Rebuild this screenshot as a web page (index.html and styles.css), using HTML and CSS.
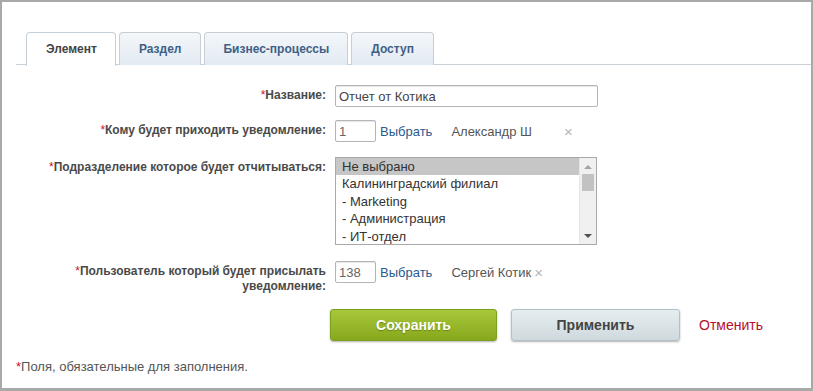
FILE: index.html
```html
<!DOCTYPE html>
<html lang="ru">
<head>
<meta charset="UTF-8">
<title>Элемент</title>
<link rel="stylesheet" href="styles.css">
</head>
<body>
<div class="frame">

  <div class="tabs">
    <div class="tab active">Элемент</div>
    <div class="tab">Раздел</div>
    <div class="tab">Бизнес-процессы</div>
    <div class="tab">Доступ</div>
  </div>

  <div class="form">
    <div class="row row-name">
      <div class="label"><span class="req">*</span>Название:</div>
      <div class="field">
        <input class="text name" type="text" value="Отчет от Котика">
      </div>
    </div>

    <div class="row row-user">
      <div class="label"><span class="req">*</span>Кому будет приходить уведомление:</div>
      <div class="field">
        <input class="text small" type="text" value="1">
        <a class="pick" href="#">Выбрать</a>
        <span class="user">Александр Ш</span>
        <span class="remove far">×</span>
      </div>
    </div>

    <div class="row row-dept">
      <div class="label"><span class="req">*</span>Подразделение которое будет отчитываться:</div>
      <div class="field">
        <div class="listbox">
          <div class="options">
            <div class="option selected">Не выбрано</div>
            <div class="option">Калининградский филиал</div>
            <div class="option">- Marketing</div>
            <div class="option">- Администрация</div>
            <div class="option">- ИТ-отдел</div>
          </div>
          <div class="scrollbar">
            <span class="arrow up"></span>
            <span class="thumb"></span>
            <span class="arrow down"></span>
          </div>
        </div>
      </div>
    </div>

    <div class="row row-sender">
      <div class="label"><span class="req">*</span>Пользователь который будет присылать<br>уведомление:</div>
      <div class="field">
        <input class="text small" type="text" value="138">
        <a class="pick" href="#">Выбрать</a>
        <span class="user">Сергей Котик</span>
        <span class="remove">×</span>
      </div>
    </div>
  </div>

  <div class="buttons">
    <button class="btn save">Сохранить</button>
    <button class="btn apply">Применить</button>
    <a class="cancel" href="#">Отменить</a>
  </div>

  <div class="note"><span class="req">*</span>Поля, обязательные для заполнения.</div>
</div>
</body>
</html>
```

FILE: styles.css
```css
* {
  box-sizing: border-box;
}
body {
  margin: 0;
  background: #fff;
  font-family: "Liberation Sans", Arial, sans-serif;
  color: #333;
}
.frame {
  width: 813px;
  height: 391px;
  border: 2px solid #a9a9a9;
  border-bottom-width: 3px;
  padding-top: 30px;
}
.tabs {
  display: flex;
  gap: 3px;
  margin-left: 14px;
  padding-left: 10px;
  border-bottom: 1px solid #c9d0d6;
  height: 33px;
}
.tab {
  height: 33px;
  padding: 0 19px;
  line-height: 32px;
  font-size: 12px;
  font-weight: bold;
  color: #3f5f86;
  border: 1px solid #c6ced6;
  border-bottom: none;
  border-radius: 4px 4px 0 0;
  background: linear-gradient(#f4f7fa, #e2eaf2);
}
.tab:nth-child(3) { padding: 0 18px; }
.tab.active {
  color: #444;
  background: #fff;
  height: 34px;
  padding: 0 18px 0 19px;
}
.form {
  padding-top: 20px;
}
.row {
  display: flex;
  align-items: flex-start;
}
.label {
  width: 324px;
  margin-right: 9px;
  padding-top: 3px;
  text-align: right;
  font-size: 12px;
  line-height: 15px;
  font-weight: bold;
  color: #4a4a4a;
}
.req {
  color: #c8102e;
  font-weight: normal;
}
.field {
  display: flex;
  align-items: center;
  font-size: 13px;
}
.row-name { margin-bottom: 13px; }
.row-user { margin-bottom: 15px; }
.row-dept { margin-bottom: 16px; }
.text {
  height: 22px;
  border: 1px solid #b5b5b5;
  border-radius: 2px;
  padding: 0 3px;
  font-family: inherit;
  font-size: 13px;
  color: #444;
  box-shadow: inset 0 1px 1px #e6e6e6;
}
.name { width: 263px; }
.small { width: 41px; color: #666; }
.pick {
  color: #2a5b8e;
  text-decoration: none;
  margin-left: 4px;
}
.user {
  margin-left: 19px;
  color: #555;
}
.remove {
  color: #b5b5b5;
  font-size: 15px;
  margin-left: 3px;
}
.remove.far {
  margin-left: 32px;
}
.listbox {
  display: flex;
  width: 262px;
  height: 88px;
  border: 1px solid #a9a9a9;
  overflow: hidden;
}
.options {
  flex: 1;
}
.option {
  height: 17.4px;
  line-height: 17px;
  padding-left: 6px;
  font-size: 13px;
  color: #333;
  white-space: nowrap;
}
.option.selected {
  background: #c6c6c6;
}
.scrollbar {
  width: 17px;
  background: #f0f0f0;
  border-left: 1px solid #e6e6e6;
  position: relative;
}
.thumb {
  position: absolute;
  left: 2px;
  top: 16px;
  width: 12px;
  height: 17px;
  background: #c2c2c2;
}
.arrow {
  position: absolute;
  left: 4px;
  width: 0;
  height: 0;
  border-left: 4px solid transparent;
  border-right: 4px solid transparent;
}
.arrow.up {
  top: 7px;
  border-bottom: 4px solid #a3a3a3;
}
.arrow.down {
  bottom: 6px;
  border-top: 4px solid #505050;
}
.buttons {
  display: flex;
  align-items: center;
  margin-top: 15px;
  padding-left: 328px;
}
.btn {
  height: 32px;
  width: 167px;
  border-radius: 3px;
  font-family: inherit;
  font-size: 14px;
  font-weight: bold;
  cursor: pointer;
}
.save {
  color: #fff;
  border: 1px solid #7f9d1f;
  background: linear-gradient(#a8c83a, #87a81c);
  text-shadow: 0 1px 1px #6a8316;
  box-shadow: 0 1px 2px rgba(0, 0, 0, 0.3);
}
.apply {
  width: 169px;
  margin-left: 14px;
  color: #444;
  border: 1px solid #b5c0c6;
  background: linear-gradient(#e6edf0, #cfdade);
  box-shadow: 0 1px 2px rgba(0, 0, 0, 0.3);
}
.cancel {
  margin-left: 19px;
  font-size: 14px;
  color: #b3102b;
  text-decoration: none;
}
.note {
  margin-top: 18px;
  margin-left: 14px;
  font-size: 13px;
  color: #555;
}
```
